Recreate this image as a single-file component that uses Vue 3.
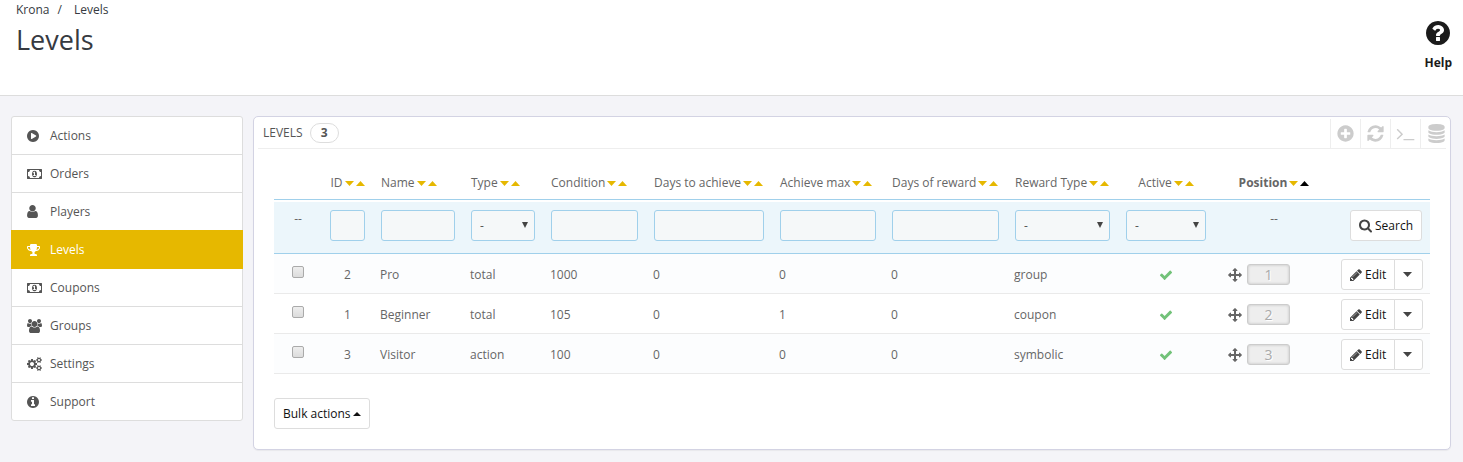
<script setup>
import { ref } from 'vue'

const disc = 'q0 209-103 385.5t-279.5 279.5-385.5 103-385.5-103-279.5-279.5-103-385.5 103-385.5 279.5-279.5 385.5-103 385.5 103 279.5 279.5 103 385.5z'
const smallCog = 'v140q0 16-149 31-12 27-30 52 51 113 51 138 0 4-4 7-122 71-124 71-8 0-46-47t-52-68q-20 2-30 2t-30-2q-14 21-52 68t-46 47q-2 0-124-71-4-3-4-7 0-25 51-138-18-25-30-52-149-15-149-31v-140q0-16 149-31 13-29 30-52-51-113-51-138 0-4 4-7 4-2 35-20t59-34 30-16q8 0 46 46.5t52 67.5q20-2 30-2t30 2q51-71 92-112l6-2q4 0 124 70 4 3 4 7 0 25-51 138 17 23 30 52 149 15 149 31z'

const icons = {
  play: { w: 12, h: 14, box: '128 0 1536 1792', d: 'M896 128q209 0 385.5 103t279.5 279.5 103 385.5-103 385.5-279.5 279.5-385.5 103-385.5-103-279.5-279.5-103-385.5 103-385.5 279.5-279.5 385.5-103zm384 823q32-18 32-55t-32-55l-544-320q-31-19-64-1-32 19-32 56v640q0 37 32 56 16 8 32 8 17 0 32-9z' },
  money: { w: 15, h: 14, box: '-64 0 1920 1792', d: 'M704 1152h384v-96h-128v-448h-114l-148 137 77 80q42-37 55-57h2v288h-128v96zm512-256q0 70-21 142t-59.5 134-101.5 101-138 39-138-39-101.500-101-59.500-134-21-142 21-142 59.500-134 101.500-101 138-39 138 39 101.500 101 59.500 134 21 142zm512 256v-512q-106 0-181-75t-75-181h-1152q0 106-75 181t-181 75v512q106 0 181 75t75 181h1152q0-106 75-181t181-75zm128-832v1152q0 26-19 45t-45 19h-1792q-26 0-45-19t-19-45v-1152q0-26 19-45t45-19h1792q26 0 45 19t19 45z' },
  user: { w: 11, h: 13, box: '256 128 1280 1536', d: 'M1536 1399q0 109-62.5 187t-150.5 78h-854q-88 0-150.500-78t-62.500-187q0-85 8.500-160.500t31.500-152 58.500-131 94-89 134.500-34.500q131 128 313 128t313-128q76 0 134.500 34.500t94 89 58.500 131 31.500 152 8.500 160.500zm-256-887q0 159-112.500 271.500t-271.500 112.500-271.500-112.500-112.500-271.500 112.500-271.500 271.500-112.500 271.500 112.500 112.500 271.500z' },
  trophy: { w: 13, h: 14, box: '64 0 1664 1792', d: 'M522 883q-74-162-74-371h-256v96q0 78 94.5 162t235.500 113zm1078-275v-96h-256q0 209-74 371 141-29 235.500-113t94.500-162zm128-128v128q0 71-41.500 143t-112 130-173 97.500-215.500 44.500q-42 54-95 95-38 34-52.500 72.500t-14.500 89.500q0 54 30.500 91t97.500 37q75 0 133.500 45.500t58.500 114.500v64q0 14-9 23t-23 9h-832q-14 0-23-9t-9-23v-64q0-69 58.500-114.500t133.500-45.500q67 0 97.500-37t30.500-91q0-51-14.500-89.500t-52.500-72.500q-53-41-95-95-113-5-215.500-44.500t-173-97.500-112-130-41.500-143v-128q0-40 28-68t68-28h288v-96q0-66 47-113t113-47h576q66 0 113 47t47 113v96h288q40 0 68 28t28 68z' },
  users: { w: 15, h: 14, box: '-64 0 1920 1792', d: 'M529 896q-162 5-265 128h-134q-82 0-138-40.5t-56-118.5q0-353 124-353 6 0 43.5 21t97.500 42.500 119 21.500q67 0 133-23-5 37-5 66 0 139 81 256zm1071 637q0 120-73 189.500t-194 69.500h-874q-121 0-194-69.500t-73-189.500q0-53 3.500-103.500t14-109 26.500-108.500 43-97.500 62-81 85.500-53.500 111.500-20q10 0 43 21.500t73 48 107 48 135 21.500 135-21.500 107-48 73-48 43-21.500q61 0 111.500 20t85.500 53.500 62 81 43 97.500 26.500 108.500 14 109 3.500 103.500zm-1024-1277q0 106-75 181t-181 75-181-75-75-181 75-181 181-75 181 75 75 181zm704 384q0 159-112.500 271.500t-271.500 112.500-271.500-112.500-112.500-271.500 112.500-271.500 271.500-112.500 271.500 112.500 112.500 271.500zm576 225q0 78-56 118.500t-138 40.500h-134q-103-123-265-128 81-117 81-256 0-29-5-66 66 23 133 23 59 0 119-21.500t97.500-42.500 43.500-21q124 0 124 353zm-128-609q0 106-75 181t-181 75-181-75-75-181 75-181 181-75 181 75 75 181z' },
  cogs: { w: 15, h: 14, box: '-64 0 1920 1792', d: 'M832 896q0-106-75-181t-181-75-181 75-75 181 75 181 181 75 181-75 75-181zm768 512q0-52-38-90t-90-38-90 38-38 90q0 53 37.500 90.500t90.500 37.500 90.500-37.500 37.500-90.500zm0-1024q0-52-38-90t-90-38-90 38-38 90q0 53 37.500 90.500t90.500 37.500 90.500-37.500 37.500-90.500zm-384 421v185q0 10-7 19.500t-16 10.500l-155 24q-11 35-32 76 34 48 90 115 7 11 7 20 0 12-7 19-23 30-82.500 89.500t-78.500 59.500q-11 0-21-7l-115-90q-37 19-77 31-11 108-23 155-7 24-30 24h-186q-11 0-20-7.500t-10-17.500l-23-153q-34-10-75-31l-118 89q-7 7-20 7-11 0-21-8-144-133-144-160 0-9 7-19 10-14 41-53t47-61q-23-44-35-82l-152-24q-10-1-17-9.500t-7-19.500v-185q0-10 7-19.500t16-10.500l155-24q11-35 32-76-34-48-90-115-7-11-7-20 0-12 7-20 22-30 82-89t79-59q11 0 21 7l115 90q34-18 77-32 11-108 23-154 7-24 30-24h186q11 0 20 7.500t10 17.500l23 153q34 10 75 31l118-89q8-7 20-7 11 0 21 8 144 133 144 160 0 8-7 19-12 16-42 54t-45 60q23 48 34 82l152 23q10 2 17 10.500t7 19.500zm640 533' + smallCog + 'm0-1024' + smallCog },
  info: { w: 12, h: 14, box: '128 0 1536 1792', d: 'M1152 1376v-160q0-14-9-23t-23-9h-96v-512q0-14-9-23t-23-9h-320q-14 0-23 9t-9 23v160q0 14 9 23t23 9h96v320h-96q-14 0-23 9t-9 23v160q0 14 9 23t23 9h448q14 0 23-9t9-23zm-128-896v-160q0-14-9-23t-23-9h-192q-14 0-23 9t-9 23v160q0 14 9 23t23 9h192q14 0 23-9t9-23zm640 416' + disc },
  question: { w: 24, h: 24, box: '128 128 1536 1536', d: 'M1024 1376v-192q0-14-9-23t-23-9h-192q-14 0-23 9t-9 23v192q0 14 9 23t23 9h192q14 0 23-9t9-23zm256-672q0-88-55.5-163t-138.500-116-170-41q-243 0-371 213-15 24 8 42l132 100q7 6 19 6 16 0 25-12 53-68 86-92 34-24 86-24 48 0 85.500 26t37.500 59q0 38-20 61t-68 45q-63 28-115.500 86.500t-52.500 125.500v36q0 14 9 23t23 9h192q14 0 23-9t9-23q0-19 21.500-49.500t54.500-49.500q32-18 49-28.500t46-35 44.500-48 28-60.500 12.500-81zm384 192' + disc },
  plus: { w: 19, h: 19, box: '0 0 1792 1792', d: 'M1344 960v-128q0-26-19-45t-45-19h-256v-256q0-26-19-45t-45-19h-128q-26 0-45 19t-19 45v256h-256q-26 0-45 19t-19 45v128q0 26 19 45t45 19h256v256q0 26 19 45t45 19h128q26 0 45-19t19-45v-256h256q26 0 45-19t19-45zm320-64' + disc },
  refresh: { w: 19, h: 19, box: '0 0 1792 1792', d: 'M1639 1056q0 5-1 7-64 268-268 434.5t-478 166.500q-146 0-282.500-55t-243.500-157l-129 129q-19 19-45 19t-45-19-19-45v-448q0-26 19-45t45-19h448q26 0 45 19t19 45-19 45l-137 137q71 66 161 102t187 36q134 0 250-65t186-179q11-17 53-117 8-23 30-23h192q13 0 22.500 9.500t9.500 22.500zm25-800v448q0 26-19 45t-45 19h-448q-26 0-45-19t-19-45 19-45l138-138q-148-137-349-137-134 0-250 65t-186 179q-11 17-53 117-8 23-30 23h-199q-13 0-22.500-9.500t-9.500-22.500v-7q65-268 270-434.500t480-166.500q146 0 284 55.500t245 156.500l130-129q19-19 45-19t45 19 19 45z' },
  terminal: { w: 19, h: 19, box: '0 0 1792 1792', d: 'M649 983l-466 466q-10 10-23 10t-23-10l-50-50q-10-10-10-23t10-23l393-393-393-393q-10-10-10-23t10-23l50-50q10-10 23-10t23 10l466 466q10 10 10 23t-10 23zm1079 457v64q0 14-9 23t-23 9h-960q-14 0-23-9t-9-23v-64q0-14 9-23t23-9h960q14 0 23 9t9 23z' },
  database: { w: 19, h: 19, box: '0 0 1792 1792', d: 'M896 768q237 0 443-43t325-127v170q0 69-103 128t-280 93.5-385 34.500-385-34.500-280-93.500-103-128v-170q119 84 325 127t443 43zm0 768q237 0 443-43t325-127v170q0 69-103 128t-280 93.500-385 34.500-385-34.500-280-93.500-103-128v-170q119 84 325 127t443 43zm0-384q237 0 443-43t325-127v170q0 69-103 128t-280 93.500-385 34.500-385-34.500-280-93.500-103-128v-170q119 84 325 127t443 43zm0-1152q208 0 385 34.500t280 93.500 103 128v128q0 69-103 128t-280 93.500-385 34.500-385-34.500-280-93.500-103-128v-128q0-69 103-128t280-93.500 385-34.500z' },
  search: { w: 13, h: 14, box: '64 128 1664 1664', d: 'M1216 832q0-185-131.5-316.500t-316.500-131.500-316.500 131.500-131.500 316.500 131.500 316.500 316.500 131.500 316.500-131.500 131.500-316.500zm512 832q0 52-38 90t-90 38q-54 0-90-38l-343-342q-179 124-399 124-143 0-273.500-55.500t-225-150-150-225-55.500-273.500 55.500-273.500 150-225 225-150 273.500-55.500 273.500 55.500 225 150 150 225 55.500 273.500q0 220-124 399l343 343q37 37 37 90z' },
  pencil: { w: 12, h: 12, box: '128 128 1536 1536', d: 'M491 1536l91-91-235-235-91 91v107h128v128h107zm523-928q0-22-22-22-10 0-17 7l-542 542q-7 7-7 17 0 22 22 22 10 0 17-7l542-542q7-7 7-17zm-54-192l416 416-832 832h-416v-416zm683 96q0 53-37 90l-166 166-416-416 166-165q36-38 90-38 53 0 91 38l235 234q37 39 37 91z' },
  check: { w: 14, h: 14, box: '0 0 1792 1792', d: 'M1671 566q0 40-28 68l-724 724-136 136q-28 28-68 28t-68-28l-136-136-362-362q-28-28-28-68t28-68l136-136q28-28 68-28t68 28l294 295 656-657q28-28 68-28t68 28l136 136q28 28 28 68z' },
  move: { w: 14, h: 14, box: '0 0 1792 1792', d: 'M1792 896q0 26-19 45l-256 256q-19 19-45 19t-45-19-19-45v-128h-384v384h128q26 0 45 19t19 45-19 45l-256 256q-19 19-45 19t-45-19l-256-256q-19-19-19-45t19-45 45-19h128v-384h-384v128q0 26-19 45t-45 19-45-19l-256-256q-19-19-19-45t19-45l256-256q19-19 45-19t45 19 19 45v128h384v-384h-128q-26 0-45-19t-19-45 19-45l256-256q19-19 45-19t45 19l256 256q19 19 19 45t-19 45-45 19h-128v384h384v-128q0-26 19-45t45-19 45 19l256 256q19 19 19 45z' },
}

const menu = [
  { label: 'Actions', icon: 'play' },
  { label: 'Orders', icon: 'money' },
  { label: 'Players', icon: 'user' },
  { label: 'Levels', icon: 'trophy', active: true },
  { label: 'Coupons', icon: 'money' },
  { label: 'Groups', icon: 'users' },
  { label: 'Settings', icon: 'cogs' },
  { label: 'Support', icon: 'info' },
]

const tools = [
  { icon: 'plus', label: 'Add new' },
  { icon: 'refresh', label: 'Refresh list' },
  { icon: 'terminal', label: 'Show SQL query' },
  { icon: 'database', label: 'Export to SQL Manager' },
]

const columns = [
  { key: 'id', label: 'ID', filter: 'text', center: true },
  { key: 'name', label: 'Name', filter: 'text' },
  { key: 'type', label: 'Type', filter: 'select' },
  { key: 'condition', label: 'Condition', filter: 'text' },
  { key: 'days', label: 'Days to achieve', filter: 'text' },
  { key: 'max', label: 'Achieve max', filter: 'text' },
  { key: 'reward', label: 'Days of reward', filter: 'text' },
  { key: 'rewardType', label: 'Reward Type', filter: 'select' },
  { key: 'active', label: 'Active', filter: 'select', center: true },
  { key: 'position', label: 'Position', center: true, sorted: true },
]

const rows = ref([
  { id: 2, name: 'Pro', type: 'total', condition: 1000, days: 0, max: 0, reward: 0, rewardType: 'group', position: 1, checked: false },
  { id: 1, name: 'Beginner', type: 'total', condition: 105, days: 0, max: 1, reward: 0, rewardType: 'coupon', position: 2, checked: false },
  { id: 3, name: 'Visitor', type: 'action', condition: 100, days: 0, max: 0, reward: 0, rewardType: 'symbolic', position: 3, checked: false },
])
</script>

<template>
  <div class="page">
    <header class="page-head">
      <div>
        <nav class="crumbs" aria-label="Breadcrumb">
          <a href="#">Krona</a><span class="slash">/</span><a href="#">Levels</a>
        </nav>
        <h1>Levels</h1>
      </div>
      <a class="help" href="#">
        <svg :width="icons.question.w" :height="icons.question.h" :viewBox="icons.question.box"><path :d="icons.question.d" /></svg>
        <span>Help</span>
      </a>
    </header>

    <div class="content">
      <nav class="menu" aria-label="Module">
        <a v-for="m in menu" :key="m.label" href="#" :class="{ active: m.active }">
          <span class="menu-icon">
            <svg :width="icons[m.icon].w" :height="icons[m.icon].h" :viewBox="icons[m.icon].box"><path :d="icons[m.icon].d" /></svg>
          </span>
          {{ m.label }}
        </a>
      </nav>

      <main class="panel">
        <div class="panel-head">
          <h2>LEVELS</h2>
          <span class="badge">3</span>
          <div class="tools">
            <a v-for="t in tools" :key="t.icon" href="#" :aria-label="t.label">
              <svg :width="icons[t.icon].w" :height="icons[t.icon].h" :viewBox="icons[t.icon].box"><path :d="icons[t.icon].d" /></svg>
            </a>
          </div>
        </div>

        <div class="panel-body">
          <table>
            <colgroup>
              <col class="c-check" />
              <col v-for="c in columns" :key="c.key" :class="'c-' + c.key" />
              <col class="c-tools" />
            </colgroup>
            <thead>
              <tr class="titles">
                <th></th>
                <th v-for="c in columns" :key="c.key" :class="{ center: c.center, sorted: c.sorted }">
                  <div class="title">
                    <span>{{ c.label }}</span>
                    <a href="#" :aria-label="'Sort descending by ' + c.label"><svg width="9" height="5" viewBox="0 0 9 5"><path d="M0 0h9L4.500 5z" /></svg></a>
                    <a href="#" class="up" :aria-label="'Sort ascending by ' + c.label"><svg width="9" height="5" viewBox="0 0 9 5"><path d="M0 5h9L4.500 0z" /></svg></a>
                  </div>
                </th>
                <th></th>
              </tr>
              <tr class="gap"><td colspan="12"></td></tr>
              <tr class="filters">
                <td class="center">--</td>
                <td v-for="c in columns" :key="c.key" :class="{ center: c.center }">
                  <input v-if="c.filter === 'text'" type="text" class="field" :aria-label="c.label" />
                  <div v-else-if="c.filter === 'select'" class="select">
                    <select class="field" :aria-label="c.label"><option>-</option></select>
                  </div>
                  <template v-else>--</template>
                </td>
                <td class="right">
                  <button type="button" class="btn search">
                    <svg :width="icons.search.w" :height="icons.search.h" :viewBox="icons.search.box"><path :d="icons.search.d" /></svg>
                    Search
                  </button>
                </td>
              </tr>
            </thead>
            <tbody>
              <tr v-for="r in rows" :key="r.id">
                <td class="center"><input v-model="r.checked" type="checkbox" :aria-label="'Select ' + r.name" /></td>
                <td class="center">{{ r.id }}</td>
                <td>{{ r.name }}</td>
                <td>{{ r.type }}</td>
                <td>{{ r.condition }}</td>
                <td>{{ r.days }}</td>
                <td>{{ r.max }}</td>
                <td>{{ r.reward }}</td>
                <td>{{ r.rewardType }}</td>
                <td class="center">
                  <a href="#" class="check" aria-label="Enabled"><svg :width="icons.check.w" :height="icons.check.h" :viewBox="icons.check.box"><path :d="icons.check.d" /></svg></a>
                </td>
                <td>
                  <div class="drag">
                    <svg :width="icons.move.w" :height="icons.move.h" :viewBox="icons.move.box"><path :d="icons.move.d" /></svg>
                    <span class="pos">{{ r.position }}</span>
                  </div>
                </td>
                <td>
                  <div class="group">
                    <button type="button" class="btn edit">
                      <svg :width="icons.pencil.w" :height="icons.pencil.h" :viewBox="icons.pencil.box"><path :d="icons.pencil.d" /></svg>
                      Edit
                    </button>
                    <button type="button" class="btn more" aria-label="More actions">
                      <svg width="9" height="5" viewBox="0 0 9 5"><path d="M0 0h9L4.500 5z" /></svg>
                    </button>
                  </div>
                </td>
              </tr>
            </tbody>
          </table>

          <button type="button" class="btn bulk">
            Bulk actions
            <svg width="8" height="4" viewBox="0 0 8 4"><path d="M0 4h8L4 0z" /></svg>
          </button>
        </div>
      </main>
    </div>
  </div>
</template>

<style>
body {
  margin: 0;
  background: #f4f4f8;
}
</style>

<style scoped>
.page {
  font: 12px/18px "Open Sans", "Noto Sans", sans-serif;
  color: #666;
}
.page * {
  box-sizing: border-box;
}
a {
  color: inherit;
  text-decoration: none;
}
svg {
  display: block;
  flex: none;
  fill: currentColor;
}
.page-head {
  display: flex;
  justify-content: space-between;
  min-height: 96px;
  padding: 1px 11px 0 16px;
  background: #fff;
  border-bottom: 1px solid #ddd;
  color: #363a41;
}
.crumbs {
  display: flex;
}
.slash {
  margin: 0 12px 0 8px;
}
h1 {
  margin: 4px 0 0;
  font-size: 27px;
  line-height: 34px;
  font-weight: 400;
}
.help {
  display: flex;
  flex-direction: column;
  align-items: center;
  gap: 9px;
  padding-top: 20px;
  font-weight: 700;
  color: #1b1b1b;
}
.content {
  display: flex;
  align-items: flex-start;
  gap: 10px;
  padding: 20px 12px 12px 11px;
}
.menu {
  flex: none;
  width: 232px;
  border: 1px solid #ddd;
  border-radius: 3px;
  background: #fff;
  color: #555;
}
.menu a {
  display: flex;
  align-items: center;
  height: 38px;
  padding-left: 15px;
  border-bottom: 1px solid #ddd;
}
.menu a:last-child {
  height: 37px;
  border-bottom: 0;
}
.menu a.active {
  height: 39px;
  margin: -1px -1px 0;
  padding: 1px 0 0 16px;
  background: #e6b800;
  border-color: #e6b800;
  color: #fff;
}
.menu-icon {
  width: 23px;
}
.panel {
  flex: 1;
  min-width: 0;
  background: #fff;
  border: 1px solid #d3d3e3;
  border-radius: 5px;
  box-shadow: 0 1px 1px #0000000d;
}
.panel-head {
  display: flex;
  align-items: center;
  height: 32px;
  margin: 0 4px;
  padding-left: 5px;
  border-bottom: 1px solid #eee;
  color: #555;
}
h2 {
  margin: 0;
  font-size: 12px;
  line-height: 18px;
  font-weight: 400;
}
.badge {
  width: 29px;
  margin-left: 7px;
  border: 1px solid #ddd;
  border-radius: 10px;
  font-weight: 700;
  text-align: center;
}
.tools {
  display: flex;
  align-self: stretch;
  margin: 2px 0 0 auto;
  color: #ccc;
}
.tools a {
  display: flex;
  align-items: center;
  justify-content: center;
  width: 30px;
  border-left: 1px solid #eee;
}
.tools a:last-child {
  justify-content: flex-end;
  width: 26px;
}
.panel-body {
  padding: 0 20px 20px;
}
table {
  width: 100%;
  table-layout: fixed;
  border-collapse: separate;
  border-spacing: 0;
}
.c-check { width: 48px; }
.c-id { width: 51px; }
.c-name { width: 90px; }
.c-type { width: 80px; }
.c-condition { width: 103px; }
.c-days { width: 126px; }
.c-max { width: 112px; }
.c-reward { width: 123px; }
.c-rewardType { width: 111px; }
.c-active { width: 96px; }
.c-position { width: 120px; }
.c-tools { width: 96px; }
th {
  height: 51px;
  padding: 18px 8px 0;
  border-bottom: 1px solid #a0d0eb;
  font-weight: 400;
  text-align: left;
  vertical-align: middle;
  white-space: nowrap;
}
th.sorted {
  font-weight: 700;
}
.title {
  display: flex;
  align-items: center;
  gap: 2px;
}
.title a {
  color: #e6b800;
}
.center {
  text-align: center;
}
.center .title {
  justify-content: center;
}
.sorted .up {
  color: #000;
}
.gap td {
  height: 2px;
  padding: 0;
}
.filters td {
  height: 52px;
  padding: 8px 8px 0;
  background: #ecf6fb;
  border-bottom: 1px solid #a0d0eb;
  vertical-align: top;
}
.field {
  display: block;
  width: 100%;
  height: 31px;
  padding: 0 8px;
  border: 1px solid #a0d0eb;
  border-radius: 3px;
  background: #f5f8f9;
  font: inherit;
  color: #555;
  appearance: none;
}
.select {
  position: relative;
}
.select::after {
  content: "";
  position: absolute;
  top: 12px;
  right: 7px;
  border: solid transparent;
  border-width: 6px 3px 0;
  border-top-color: #444;
  pointer-events: none;
}
.btn {
  display: inline-flex;
  align-items: center;
  gap: 3px;
  height: 31px;
  padding: 0 8px;
  border: 1px solid #ddd;
  border-radius: 3px;
  background: #fff;
  font: inherit;
  color: #111;
  white-space: nowrap;
}
.btn svg {
  color: #444;
}
.right {
  text-align: right;
}
tbody td {
  height: 40px;
  padding: 2px 7px 0;
  border-bottom: 1px solid #eaeaea;
}
tbody tr:nth-child(odd) td {
  background: #fcfdfe;
}
input[type="checkbox"] {
  display: block;
  width: 12px;
  height: 12px;
  margin: 0 auto 6px;
  border: 1px solid #aaa;
  border-radius: 2px;
  background: linear-gradient(#eee, #dcdcdc);
  appearance: none;
}
input[type="checkbox"]:checked {
  background: #666;
}
.check {
  display: inline-block;
  vertical-align: middle;
  color: #72c279;
}
.drag {
  display: flex;
  align-items: center;
  gap: 5px;
  padding-left: 7px;
}
.pos {
  width: 43px;
  border: 1px solid #ccc;
  border-radius: 3px;
  background: #eee;
  box-shadow: inset 0 0 3px #0003;
  font-size: 14px;
  line-height: 19px;
  color: #aaa;
  text-align: center;
  text-shadow: 1px 1px #fff;
}
.group {
  display: flex;
  justify-content: flex-end;
}
.edit {
  border-radius: 3px 0 0 3px;
}
.more {
  width: 29px;
  margin-left: -1px;
  border-radius: 0 3px 3px 0;
}
.bulk {
  gap: 2px;
  margin-top: 24px;
}
.bulk svg {
  color: #111;
}
</style>
